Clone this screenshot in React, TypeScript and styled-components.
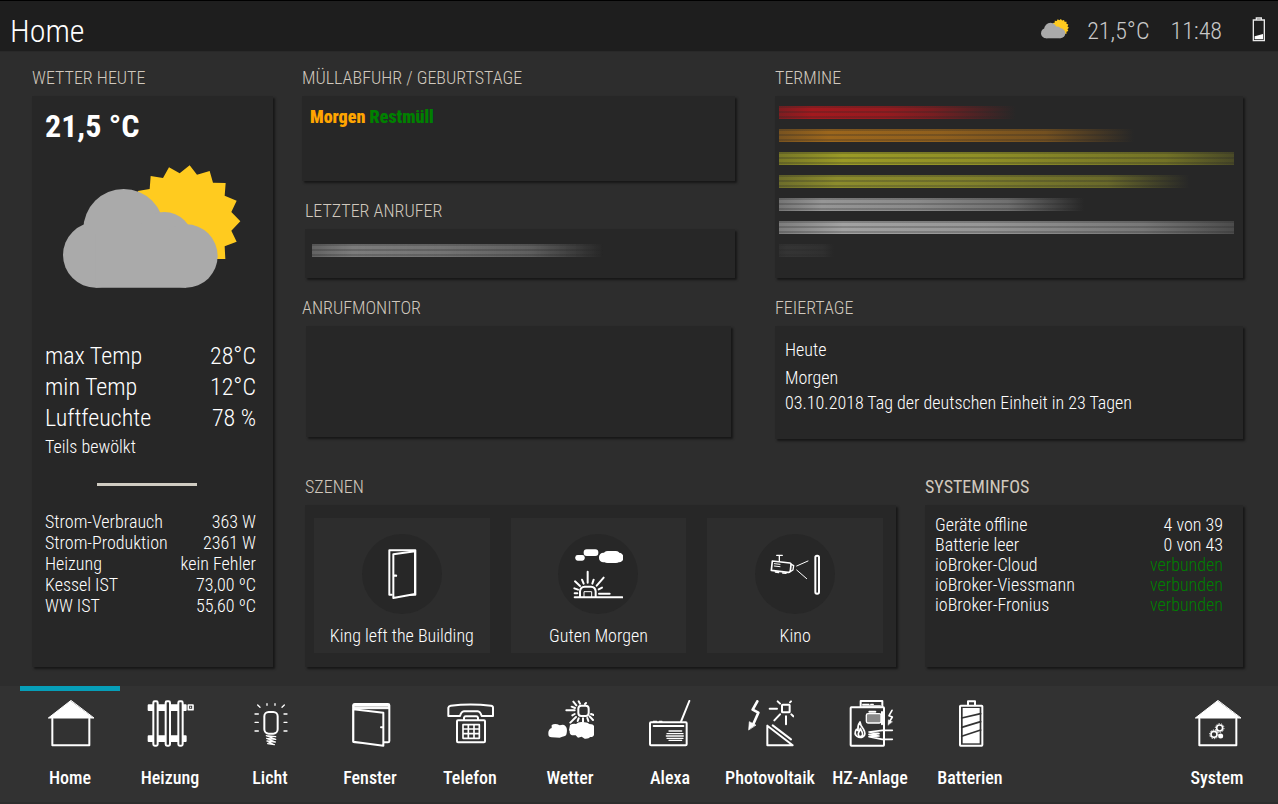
import React from 'react';
import styled, { createGlobalStyle } from 'styled-components';

const GlobalStyle = createGlobalStyle`
  *, *::before, *::after { box-sizing: border-box; }
  body {
    margin: 0;
    background: #2d2d2d;
    color: #fff;
    font-family: 'Roboto Condensed', 'Liberation Sans Narrow', Roboto, sans-serif;
    font-size: 18px;
    font-weight: 300;
  }
`;

const Page = styled.div`
  display: flex;
  flex-direction: column;
  min-height: 100vh;
`;

const TopBar = styled.header`
  display: flex;
  align-items: center;
  height: 52px;
  padding: 10px 12px 0 10px;
  background: #1e1e1e;
  border-top: 1px solid #000;
  border-bottom: 1px solid #292929;
`;

const PageTitle = styled.h1`
  margin: 0;
  flex: 1;
  font-size: 32px;
  font-weight: 300;
  line-height: 40px;
`;

const Status = styled.div`
  display: flex;
  align-items: center;
  color: #c9c9c9;
  font-size: 24px;
  line-height: 40px;
`;

const StatusText = styled.span`
  margin-left: ${(p: { $gap: number }) => p.$gap}px;
`;

const StatusBattery = styled.svg`
  width: 14px;
  height: 25px;
  margin: 0 0 4px 30px;
`;

const StatusWeather = styled.div`
  width: 28px;
  margin-bottom: 4px;
  display: flex;
`;

const Main = styled.main`
  flex: 1;
  display: grid;
  grid-template-columns: 241px 1fr;
  column-gap: 29px;
  padding: 14px 35px 19px 32px;
`;

const Section = styled.section<{ $inset?: boolean }>`
  display: flex;
  flex-direction: column;
  margin-left: ${(p) => (p.$inset ? 3 : 0)}px;
`;

const SectionTitle = styled.h2<{ $strong?: boolean }>`
  margin: 0 0 6px;
  color: #d0c8bd;
  font-size: 18px;
  font-weight: ${(p) => (p.$strong ? 400 : 300)};
  line-height: 24px;
  text-transform: uppercase;
`;

const Card = styled.div<{ $height?: number; $inset?: boolean }>`
  flex: ${(p) => (p.$height ? 'none' : 1)};
  min-height: ${(p) => p.$height ?? 0}px;
  margin: 0 ${(p) => (p.$inset ? 4 : 0)}px;
  background: #272727;
  box-shadow: 2px 2px 2px #171717;
`;

const Content = styled.div`
  display: flex;
  flex-direction: column;
  gap: 36px;
`;

const UpperRow = styled.div`
  display: grid;
  grid-template-columns: 433fr 468fr;
  column-gap: 40px;
`;

const LowerRow = styled.div`
  flex: 1;
  display: grid;
  grid-template-columns: 594fr 318fr;
  column-gap: 29px;
`;

const Column = styled.div`
  display: flex;
  flex-direction: column;
  gap: 18px;
`;

const WeatherCard = styled(Card)`
  display: flex;
  flex-direction: column;
  padding: 10px 17px 0 13px;
`;

const CurrentTemp = styled.div`
  font-size: 32px;
  font-weight: 700;
  line-height: 40px;
`;

const WeatherPicture = styled.div`
  width: 178px;
  margin: 19px 0 53px 18px;
  display: flex;
`;

const List = styled.dl<{ $size: number; $row: number }>`
  margin: 0;
  font-size: ${(p) => p.$size}px;
  line-height: ${(p) => p.$row}px;
`;

const ListRow = styled.div`
  display: flex;
  justify-content: space-between;
`;

const Term = styled.dt``;

const Value = styled.dd<{ $ok?: boolean }>`
  margin: 0;
  color: ${(p) => (p.$ok ? '#008000' : 'inherit')};
`;

const Condition = styled.p`
  margin: 0;
  line-height: 26px;
`;

const Divider = styled.hr`
  width: 100px;
  height: 3px;
  margin: 23px 0 25px 52px;
  border: 0;
  background: #d0ccc2;
`;

const Waste = styled.p`
  margin: 0;
  padding: 9px 8px;
  font-weight: 900;
  line-height: 24px;
`;

const Due = styled.span`
  color: #ffa500;
`;

const Kind = styled.span`
  color: #008000;
`;

const Bars = styled.div<{ $pad: string }>`
  display: flex;
  flex-direction: column;
  gap: 10px;
  padding: ${(p) => p.$pad};
`;

const Bar = styled.div<{ $color: string; $width: number; $fade: number }>`
  width: ${(p) => p.$width}%;
  height: 13px;
  background:
    repeating-linear-gradient(180deg, rgba(39, 39, 39, 0.25) 0 2px, rgba(39, 39, 39, 0) 2px 5px),
    linear-gradient(
      90deg,
      rgba(39, 39, 39, 0.3),
      rgba(39, 39, 39, 0) 14%,
      rgba(39, 39, 39, 0.1) 45%,
      rgba(39, 39, 39, 0.35) ${(p) => p.$fade}%,
      rgba(39, 39, 39, ${(p) => (p.$width === 100 ? 0.7 : 1)})
    ),
    ${(p) => p.$color};
`;

const HolidayCard = styled(Card)`
  padding: 11px 10px;
  line-height: 25px;
`;

const Line = styled.p<{ $after?: number }>`
  margin: 0 0 ${(p) => p.$after ?? 0}px;
`;

const SceneCard = styled(Card)`
  display: grid;
  grid-template-columns: repeat(3, 1fr);
  gap: 21px;
  align-items: start;
  padding: 13px 13px 13px 9px;
`;

const SceneButton = styled.button`
  display: flex;
  flex-direction: column;
  align-items: center;
  min-height: 135px;
  padding: 16px 0 0;
  border: 0;
  background: #2d2d2d;
  color: inherit;
  font: inherit;
  line-height: 24px;
  cursor: pointer;
`;

const SceneDisc = styled.span`
  display: grid;
  place-items: center;
  width: 80px;
  height: 80px;
  margin-bottom: 10px;
  border-radius: 50%;
  background: #272727;
`;

const SystemCard = styled(Card)`
  padding: 10px 20px 0 10px;
`;

const NavBar = styled.nav`
  display: flex;
  height: 118px;
  padding: 0 11px 0 20px;
  background: #323232;
  border-bottom: 2px solid #2d2d2d;
`;

const NavLink = styled.a<{ $active?: boolean; $last?: boolean }>`
  display: flex;
  flex-direction: column;
  align-items: center;
  width: 100px;
  margin-left: ${(p) => (p.$last ? 'auto' : 0)};
  padding-top: 9px;
  border-top: 5px solid ${(p) => (p.$active ? '#069eb8' : 'transparent')};
  color: #fff;
  font-weight: 500;
  line-height: 24px;
  text-decoration: none;
  white-space: nowrap;
`;

const IconSvg = styled.svg`
  fill: none;
  stroke: #fff;
  stroke-width: 6;
  stroke-linejoin: round;
  stroke-linecap: round;
`;

const NavSvg = styled(IconSvg)`
  width: 47px;
  height: 47px;
  margin-bottom: 19px;
`;

const SceneSvg = styled(IconSvg)`
  width: 50px;
  height: 50px;
`;

const FullSvg = styled.svg`
  width: 100%;
`;

const PartlyCloudy = () => (
  <FullSvg viewBox="188 495 534 369" role="img" aria-label="Teils bewölkt">
    <path
      fill="#ffcb1f"
      d="M412 573 448 567 451 528 488 534 506 502 538 520 568 496 590 524 628 513 638 548 676 549 673 587 709 602 693 636 720 664 693 692 709 725 673 739 675 777H600L480 700Z"
    />
    <g fill="#aaa">
      <circle cx="286" cy="765" r="98" />
      <circle cx="370" cy="688" r="121" />
      <circle cx="492" cy="722" r="86" />
      <circle cx="557" cy="768" r="95" />
      <path d="M286 700H557V863H286Z" />
    </g>
  </FullSvg>
);

const House = () => (
  <>
    <path d="M71 2 4 54H140Z" fill="#fff" stroke="#fff" strokeWidth="3" />
    <path d="M16 56V136H127V56" />
  </>
);

const HeatingIcon = () => (
  <>
    <path d="M5 16H116V30H5ZM5 109H116V123H5Z" fill="#fff" />
    <g fill="#323232">
      <rect x="19" y="4" width="13" height="133" rx="4" />
      <rect x="56" y="4" width="13" height="133" rx="4" />
      <rect x="94" y="4" width="13" height="133" rx="4" />
    </g>
    <rect x="124" y="15" width="14" height="14" strokeWidth="5" />
    <path d="M131 21V23" strokeWidth="3" />
  </>
);

const LightIcon = () => (
  <>
    <rect x="52" y="36" width="40" height="65" rx="13" />
    <path d="M58 107 86 110M59 115 86 118M60 123 85 126M62 131 82 134M58 107 86 118M59 115 85 126M62 124 80 134" strokeWidth="4" />
    <path d="M24 42H34M24 67H34M24 93H34M111 42H120M111 67H120M111 93H120M32 15 39 22M60 11V16M84 11V16M112 15 105 22" strokeWidth="4" />
  </>
);

const WindowIcon = () => (
  <>
    <rect x="19" y="12" width="108" height="115" rx="4" />
    <path d="M19 14H127V26H19Z" fill="#fff" strokeWidth="3" />
    <path d="M19 28 109 38V137L19 125Z" fill="#323232" />
    <path d="M102 82H106" />
    <path d="M24 20H122" stroke="#aaa" strokeWidth="2" />
  </>
);

const PhoneIcon = () => (
  <>
    <path d="M4 48V23Q5 18 11 17 70 10 132 17 138 18 138 23V48H104Q100 35 92 34H51Q43 35 39 48Z" />
    <path d="M51 60V53Q52 49 56 49H88Q92 49 93 53V60" />
    <rect x="30" y="61" width="84" height="66" rx="3" />
    <path d="M48 74H97V115H48ZM64 74V115M81 74V115M48 87H97M48 101H97" strokeWidth="5" />
  </>
);

const WeatherIcon = () => (
  <>
    <rect x="94" y="17" width="31" height="31" rx="9" />
    <path d="M58 31H83M79 5 88 16M95 4 99 11M74 20 84 24M76 46 83 42M70 68 87 51M95 55 92 63M108 55V66M121 54 124 63M128 49 138 60M132 42 140 45M117 9 114 12" />
    <path d="M14 75Q25 68 38 76 50 72 55 78 62 84 59 100 58 110 46 110L38 113 14 112Q4 112 4 102 3 88 14 84Z" fill="#fff" stroke="none" />
    <path d="M69 75Q78 70 87 72 95 63 113 67 123 67 127 72 139 72 141 78V104Q140 111 130 111 125 117 113 116L104 110 93 113 86 106 75 106Q67 103 68 94L66 90Z" fill="#fff" stroke="none" />
  </>
);

const RadioIcon = () => (
  <>
    <rect x="9" y="67" width="110" height="69" rx="3" />
    <path d="M102 65 127 3M20 78H109" />
    <path d="M19 64H29M37 64H45" strokeWidth="4" />
    <path d="M66 93H104M60 101H108M58 108H109M60 115H108M66 121H104" strokeWidth="4" />
  </>
);

const SolarIcon = () => (
  <>
    <path d="M31 4 17 29 34 38 19 72" strokeWidth="8" />
    <path d="M5 89 7 65 26 75Z" fill="#fff" strokeWidth="2" />
    <rect x="105" y="14" width="23" height="23" rx="2" />
    <path d="M68 26H90M92 4 99 11M99 43 82 61M117 49V73M133 43 139 49M129 7 132 4" />
    <path d="M61 77V136H137ZM77 76 132 118" />
  </>
);

const BoilerIcon = () => (
  <>
    <rect x="11" y="22" width="100" height="115" rx="2" />
    <path d="M41 21V3H106V21" />
    <path d="M47 13H66M71 13H79M47 18H100" strokeWidth="4" />
    <rect x="58" y="41" width="44" height="28" rx="5" fill="#888" strokeWidth="4" />
    <path d="M67 35H85M105 36V73" strokeWidth="6" />
    <path d="M135 31 126 47 136 51 128 64" strokeWidth="5" />
    <path d="M123 75 124 59 136 65Z" fill="#fff" strokeWidth="1" />
    <path d="M39 66Q41 79 49 87 59 104 48 110 39 115 30 109 20 101 28 88L33 92Q31 77 39 66ZM40 85Q38 94 34 100 33 109 40 110 49 108 46 98Z" strokeWidth="5" />
    <path d="M136 91H106L66 96 96 101 66 103 96 108 66 110 106 118H136" strokeWidth="5" />
  </>
);

const BatteryIcon = () => (
  <>
    <rect x="39" y="17" width="67" height="120" rx="2" />
    <path d="M63 16V4H84V16" />
    <path d="M47 24H98V130H47Z" fill="#fff" stroke="none" />
    <path d="M44 54 101 41M44 82 101 65M44 109 101 90" stroke="#323232" strokeWidth="5" />
  </>
);

const SystemIcon = () => (
  <>
    <House />
    <g strokeWidth="5">
      <circle cx="77" cy="84" r="9" />
      <circle cx="60" cy="103" r="9" />
      <circle cx="80" cy="108" r="5" fill="#fff" />
    </g>
    <g strokeWidth="3" strokeLinecap="butt" strokeDasharray="4 4">
      <circle cx="77" cy="84" r="13" />
      <circle cx="60" cy="103" r="13" />
    </g>
  </>
);

const DoorIcon = () => (
  <>
    <path d="M44 137H37V4H115V137H60" />
    <path d="M49 16 114 7V135L49 147Z" fill="#272727" />
    <path d="M52 80H57" strokeWidth="7" />
  </>
);

const SunriseIcon = () => (
  <>
    <g fill="#fff" stroke="none">
      <rect x="7" y="18" width="28" height="17" rx="7" />
      <rect x="32" y="1" width="44" height="20" rx="9" />
      <rect x="78" y="11" width="73" height="29" rx="13" />
      <rect x="92" y="6" width="48" height="36" rx="12" />
    </g>
    <path d="M5 145H148" />
    <path d="M21 143V127Q22 114 35 113H54Q67 114 68 127V143" />
    <path d="M33 143V128H56V143" strokeWidth="3" />
    <path d="M44 68V101M92 86 71 110M6 97 21 111M27 92 32 104M62 92 58 104M4 118 15 122M87 116 77 121M5 133H13M78 134H110" />
  </>
);

const ProjectorIcon = () => (
  <>
    <path d="M20 19H37M28 19V37" strokeWidth="4" />
    <path d="M7 36 60 42Q64 43 63 47L61 66Q60 71 54 70L4 64Z" strokeWidth="5" />
    <path d="M64 46 71 50 69 63 62 67M16 69 26 71M38 72 48 73" strokeWidth="4" />
    <path d="M13 44 30 46M13 51 30 53" strokeWidth="3" />
    <path d="M80 51 114 36M80 63 110 89" strokeWidth="3" />
    <rect x="136" y="20" width="11" height="114" rx="5" />
  </>
);

const navItems = [
  { label: 'Home', Icon: House },
  { label: 'Heizung', Icon: HeatingIcon },
  { label: 'Licht', Icon: LightIcon },
  { label: 'Fenster', Icon: WindowIcon },
  { label: 'Telefon', Icon: PhoneIcon },
  { label: 'Wetter', Icon: WeatherIcon },
  { label: 'Alexa', Icon: RadioIcon },
  { label: 'Photovoltaik', Icon: SolarIcon },
  { label: 'HZ-Anlage', Icon: BoilerIcon },
  { label: 'Batterien', Icon: BatteryIcon },
  { label: 'System', Icon: SystemIcon },
];

const scenes = [
  { label: 'King left the Building', Icon: DoorIcon },
  { label: 'Guten Morgen', Icon: SunriseIcon },
  { label: 'Kino', Icon: ProjectorIcon },
];

const climate = [
  ['max Temp', '28°C'],
  ['min Temp', '12°C'],
  ['Luftfeuchte', '78 %'],
];

const energy = [
  ['Strom-Verbrauch', '363 W'],
  ['Strom-Produktion', '2361 W'],
  ['Heizung', 'kein Fehler'],
  ['Kessel IST', '73,00 ºC'],
  ['WW IST', '55,60 ºC'],
];

const system = [
  ['Geräte offline', '4 von 39'],
  ['Batterie leer', '0 von 43'],
  ['ioBroker-Cloud', 'verbunden'],
  ['ioBroker-Viessmann', 'verbunden'],
  ['ioBroker-Fronius', 'verbunden'],
];

const appointments = [
  { color: '#a3191e', width: 52, fade: 65 },
  { color: '#9c661c', width: 78, fade: 75 },
  { color: '#9a9a26', width: 100, fade: 85 },
  { color: '#8c8c2c', width: 90, fade: 80 },
  { color: '#969696', width: 67, fade: 75 },
  { color: '#a2a2a2', width: 100, fade: 80 },
  { color: '#343434', width: 12, fade: 80 },
];

const Pairs = ({ rows, size, row }: { rows: string[][]; size: number; row: number }) => (
  <List $size={size} $row={row}>
    {rows.map(([term, value]) => (
      <ListRow key={term}>
        <Term>{term}</Term>
        <Value $ok={value === 'verbunden'}>{value}</Value>
      </ListRow>
    ))}
  </List>
);

export default function App() {
  return (
    <Page>
      <GlobalStyle />
      <TopBar>
        <PageTitle>Home</PageTitle>
        <Status>
          <StatusWeather>
            <PartlyCloudy />
          </StatusWeather>
          <StatusText $gap={18}>21,5°C</StatusText>
          <StatusText $gap={21}>11:48</StatusText>
          <StatusBattery viewBox="0 0 42 75" fill="none" stroke="#e8e8e8" strokeWidth="4" aria-label="Batterie">
            <path d="M4 9H37V71H4ZM13 9V3H28V9" />
            <path d="M8 58 33 51V67H8Z" fill="#fff" stroke="none" />
          </StatusBattery>
        </Status>
      </TopBar>

      <Main>
        <Section>
          <SectionTitle>Wetter heute</SectionTitle>
          <WeatherCard>
            <CurrentTemp>21,5 °C</CurrentTemp>
            <WeatherPicture>
              <PartlyCloudy />
            </WeatherPicture>
            <Pairs rows={climate} size={24} row={31} />
            <Condition>Teils bewölkt</Condition>
            <Divider />
            <Pairs rows={energy} size={18} row={21} />
          </WeatherCard>
        </Section>

        <Content>
          <UpperRow>
            <Column>
              <Section>
                <SectionTitle>Müllabfuhr / Geburtstage</SectionTitle>
                <Card $height={85}>
                  <Waste>
                    <Due>Morgen</Due> <Kind>Restmüll</Kind>
                  </Waste>
                </Card>
              </Section>
              <Section $inset>
                <SectionTitle>Letzter Anrufer</SectionTitle>
                <Card $height={49}>
                  <Bars $pad="15px 7px">
                    <Bar $color="#7c7c7c" $width={70} $fade={75} />
                  </Bars>
                </Card>
              </Section>
              <Section>
                <SectionTitle>Anrufmonitor</SectionTitle>
                <Card $height={111} $inset />
              </Section>
            </Column>
            <Column>
              <Section>
                <SectionTitle>Termine</SectionTitle>
                <Card $height={182}>
                  <Bars $pad="10px 9px 10px 4px">
                    {appointments.map((a, i) => (
                      <Bar key={i} $color={a.color} $width={a.width} $fade={a.fade} />
                    ))}
                  </Bars>
                </Card>
              </Section>
              <Section>
                <SectionTitle>Feiertage</SectionTitle>
                <HolidayCard $height={113}>
                  <Line $after={3}>Heute</Line>
                  <Line>Morgen</Line>
                  <Line>03.10.2018 Tag der deutschen Einheit in 23 Tagen</Line>
                </HolidayCard>
              </Section>
            </Column>
          </UpperRow>

          <LowerRow>
            <Section $inset>
              <SectionTitle>Szenen</SectionTitle>
              <SceneCard>
                {scenes.map(({ label, Icon }) => (
                  <SceneButton key={label} type="button">
                    <SceneDisc>
                      <SceneSvg viewBox="0 0 150 150" aria-hidden="true">
                        <Icon />
                      </SceneSvg>
                    </SceneDisc>
                    {label}
                  </SceneButton>
                ))}
              </SceneCard>
            </Section>
            <Section>
              <SectionTitle $strong>Systeminfos</SectionTitle>
              <SystemCard>
                <Pairs rows={system} size={18} row={20} />
              </SystemCard>
            </Section>
          </LowerRow>
        </Content>
      </Main>

      <NavBar>
        {navItems.map(({ label, Icon }, i) => (
          <NavLink key={label} href={`#${label}`} $active={i === 0} $last={label === 'System'}>
            <NavSvg viewBox="0 0 141 141" aria-hidden="true">
              <Icon />
            </NavSvg>
            {label}
          </NavLink>
        ))}
      </NavBar>
    </Page>
  );
}
